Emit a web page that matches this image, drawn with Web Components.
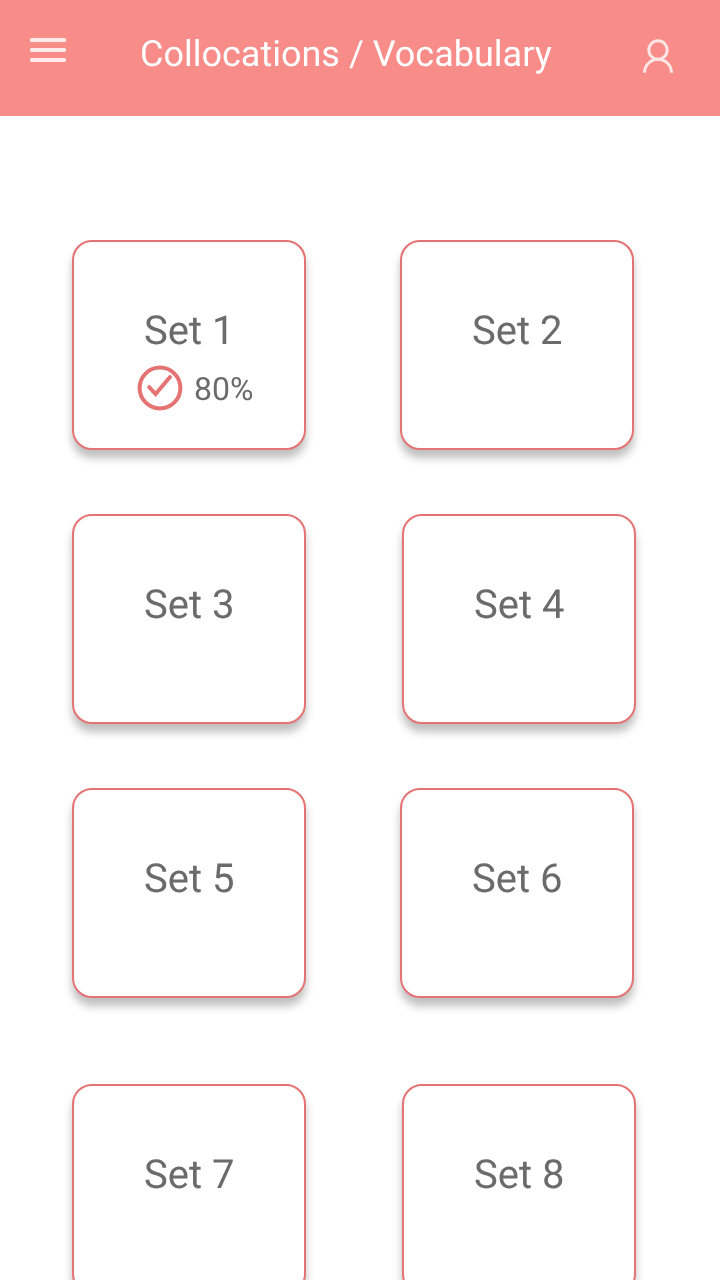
<!DOCTYPE html>
<html lang="en">
<head>
<meta charset="utf-8">
<title>Collocations / Vocabulary</title>
<style>
html, body { margin: 0; height: 100%; overflow: hidden; background: #fff; font-family: Roboto, sans-serif; text-rendering: geometricPrecision; }
</style>
</head>
<body>
<vocab-screen></vocab-screen>
<script>
class MenuIcon extends HTMLElement {
  constructor() {
    super();
    this.attachShadow({ mode: 'open' }).innerHTML = `
      <style>:host { display: block; width: 36px; height: 24px; } svg { display: block; }</style>
      <svg width="36" height="24" fill="#fff" fill-opacity=".82">
        <rect width="36" height="4" rx="1.6"/><rect y="10" width="36" height="4" rx="1.6"/><rect y="20" width="36" height="4" rx="1.6"/>
      </svg>`;
  }
}
customElements.define('menu-icon', MenuIcon);

class UserIcon extends HTMLElement {
  constructor() {
    super();
    this.attachShadow({ mode: 'open' }).innerHTML = `
      <style>:host { display: block; width: 30px; height: 34px; } svg { display: block; }</style>
      <svg width="30" height="34" fill="none" stroke="#fde6e5" stroke-width="3">
        <circle cx="15" cy="11" r="9.2"/><path d="M1.5 33.8a13.5 13.5 0 0 1 27 0"/>
      </svg>`;
  }
}
customElements.define('user-icon', UserIcon);

class AppBar extends HTMLElement {
  constructor() {
    super();
    this.attachShadow({ mode: 'open' }).innerHTML = `
      <style>
        :host { display: flex; align-items: flex-start; box-sizing: border-box; height: 116px; padding: 0 47px 0 30px; background: #f78c89; color: #fff; }
        menu-icon { margin-top: 38px; }
        h1 { flex: 1; margin: 33px 0 0 73.5px; font-size: 36px; line-height: 42px; font-weight: 400; white-space: nowrap; will-change: transform; }
        user-icon { margin-top: 39px; }
      </style>
      <menu-icon></menu-icon><h1><slot></slot></h1><user-icon></user-icon>`;
  }
}
customElements.define('app-bar', AppBar);

class SetScore extends HTMLElement {
  constructor() {
    super();
    this.attachShadow({ mode: 'open' }).innerHTML = `
      <style>
        :host { display: flex; align-items: center; gap: 11px; height: 46px; font-size: 32px; line-height: 46px; }
        svg { display: block; }
        span { padding-top: 1px; will-change: transform; }
      </style>
      <svg width="46" height="46" fill="none" stroke="#e57373" stroke-width="4" stroke-linecap="round">
        <circle cx="23" cy="23" r="20.4"/><path d="M12.2 22.2l6.4 6.8 14.4-17"/>
      </svg>
      <span><slot></slot></span>`;
  }
}
customElements.define('set-score', SetScore);

class SetCard extends HTMLElement {
  constructor() {
    super();
    this.attachShadow({ mode: 'open' }).innerHTML = `
      <style>
        :host { display: flex; flex-direction: column; align-items: center; box-sizing: border-box; width: 234px; height: 210px; padding-top: 65px;
          border: 2px solid #e57373; border-radius: 20px; background: #fff; color: #6b6b6b; box-shadow: 0 8px 8px rgba(0,0,0,.25); }
        .name { padding-left: 1px; font-size: 40px; line-height: 47px; will-change: transform; }
        ::slotted(set-score) { margin: 11px 0 0 13px; }
      </style>
      <div class="name"><slot name="name"></slot></div><slot></slot>`;
  }
}
customElements.define('set-card', SetCard);

class SetRow extends HTMLElement {
  constructor() {
    super();
    this.attachShadow({ mode: 'open' }).innerHTML = `
      <style>:host { display: flex; gap: var(--gap, 94px); }</style><slot></slot>`;
  }
}
customElements.define('set-row', SetRow);

class VocabScreen extends HTMLElement {
  constructor() {
    super();
    this.attachShadow({ mode: 'open' }).innerHTML = `
      <style>
        :host { display: block; width: 720px; height: 1280px; overflow: hidden; background: #fff; }
        main { display: flex; flex-direction: column; gap: 64px; padding: 124px 0 0 72px; }
        .wide { --gap: 96px; }
        .last { margin-top: 22px; }
      </style>
      <app-bar>Collocations / Vocabulary</app-bar>
      <main>
        <set-row>
          <set-card><span slot="name">Set 1</span><set-score>80%</set-score></set-card>
          <set-card><span slot="name">Set 2</span></set-card>
        </set-row>
        <set-row class="wide">
          <set-card><span slot="name">Set 3</span></set-card>
          <set-card><span slot="name">Set 4</span></set-card>
        </set-row>
        <set-row>
          <set-card><span slot="name">Set 5</span></set-card>
          <set-card><span slot="name">Set 6</span></set-card>
        </set-row>
        <set-row class="wide last">
          <set-card><span slot="name">Set 7</span></set-card>
          <set-card><span slot="name">Set 8</span></set-card>
        </set-row>
      </main>`;
  }
}
customElements.define('vocab-screen', VocabScreen);
</script>
</body>
</html>
